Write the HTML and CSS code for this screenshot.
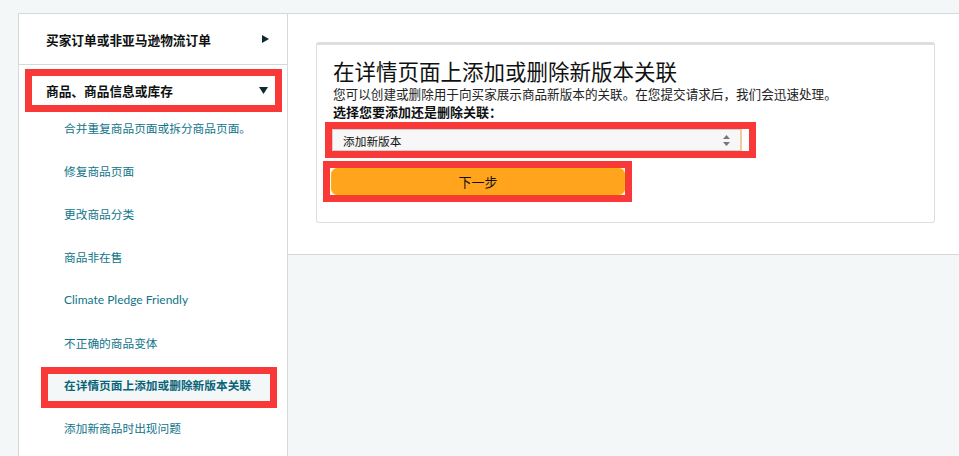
FILE: index.html
```html
<!DOCTYPE html>
<html lang="zh-CN">
<head>
    <meta charset="UTF-8">
    <meta name="viewport" content="width=device-width, initial-scale=1.0">
    <title>在详情页面上添加或删除新版本关联</title>
    <link rel="stylesheet" href="styles.css">
</head>
<body>

    <div class="page">
        <div class="sidebar">
            <div class="menu-head">
                <span>买家订单或非亚马逊物流订单</span>
                <svg class="caret" width="7" height="8" viewBox="0 0 7 8"><polygon points="0,0 7,4 0,8" fill="#0f2a33"/></svg>
            </div>

            <div class="menu-head open">
                <span>商品、商品信息或库存</span>
                <svg class="caret" width="9" height="7" viewBox="0 0 9 7"><polygon points="0,0 9,0 4.5,7" fill="#0f2a33"/></svg>
            </div>

            <ul class="sub-menu">
                <li>合并重复商品页面或拆分商品页面。</li>
                <li>修复商品页面</li>
                <li>更改商品分类</li>
                <li>商品非在售</li>
                <li class="latin">Climate Pledge Friendly</li>
                <li>不正确的商品变体</li>
                <li class="active">在详情页面上添加或删除新版本关联</li>
                <li>添加新商品时出现问题</li>
            </ul>
        </div>

        <div class="main">
            <div class="card">
                <div class="card-title">在详情页面上添加或删除新版本关联</div>
                <div class="card-desc">您可以创建或删除用于向买家展示商品新版本的关联。在您提交请求后，我们会迅速处理。</div>
                <div class="card-label">选择您要添加还是删除关联：</div>

                <div class="select-wrap">
                    <div class="select-box">
                        <span>添加新版本</span>
                        <svg width="7" height="11" viewBox="0 0 7 11"><polygon points="3.5,0 7,4 0,4" fill="#777"/><polygon points="0,7 7,7 3.5,11" fill="#777"/></svg>
                    </div>
                </div>

                <div class="btn-wrap">
                    <button class="next-btn">下一步</button>
                </div>
            </div>
        </div>
    </div>

</body>
</html>
```

FILE: styles.css
```css
body {
    margin: 0;
    background-color: #f4f7f8;
    font-family: "Noto Sans CJK SC", sans-serif;
    color: #0f1111;
    overflow: hidden;
}

.page {
    display: flex;
    align-items: flex-start;
    padding: 13px 0 0 18px;
}

.sidebar {
    width: 270px;
    height: 460px;
    box-sizing: border-box;
    background-color: white;
    border: 1px solid #d5d9d9;
    border-bottom: none;
    flex-shrink: 0;
}

.menu-head {
    display: flex;
    justify-content: space-between;
    align-items: center;
    font-size: 12.7px;
    font-weight: bold;
    height: 50px;
    padding: 0 18px 0 27px;
    border-bottom: 1px solid #d5d9d9;
}

.menu-head.open {
    height: 29px;
    margin: 4px 5px 0 6px;
    padding: 0 7px 0 14px;
    border: 7px solid #f93838;
}

.sub-menu {
    list-style: none;
    margin: -6px 0 0;
    padding: 0;
}

.sub-menu li {
    height: 43px;
    line-height: 43px;
    padding-left: 45px;
    font-size: 11.7px;
    color: #0f7489;
    white-space: nowrap;
}

.sub-menu li.latin {
    font-family: Lato, sans-serif;
    font-size: 12px;
}

.sub-menu li.active {
    height: 27px;
    line-height: 22px;
    margin: 3px 10px -2px 22px;
    padding-left: 16px;
    border: 7px solid #f93838;
    background-color: #f3f7f8;
    font-weight: bold;
    color: #0a6478;
}

.main {
    flex: 1;
    height: 242px;
    box-sizing: border-box;
    background-color: white;
    border-top: 1px solid #d5d9d9;
    border-bottom: 1px solid #d5d9d9;
    padding: 28px 24px 0 28px;
}

.card {
    border: 1px solid #dedede;
    border-top: 3px solid #dedede;
    border-radius: 3px;
    padding: 13px 16px 20px;
}

.card-title {
    font-size: 21.5px;
    line-height: 26px;
    margin-bottom: 2px;
    color: #0f1111;
}

.card-desc {
    font-size: 12.6px;
    line-height: 16px;
    color: #222;
}

.card-label {
    font-size: 13px;
    line-height: 18px;
    margin-top: 1px;
    font-weight: bold;
}

.select-wrap {
    margin: 1px 0 0 -8px;
    border: 7px solid #f93838;
    width: 417px;
    height: 22px;
}

.select-box {
    display: flex;
    justify-content: space-between;
    align-items: center;
    width: 410px;
    height: 22px;
    box-sizing: border-box;
    padding: 0 10px;
    background-color: #f7f7f7;
    border: 1px solid #d0d0d0;
    border-right: 2px solid #f5c9a0;
    font-size: 11.7px;
}

.btn-wrap {
    width: 295px;
    height: 27px;
    margin: 3px 0 0 -10px;
    border: 7px solid #f93838;
}

.next-btn {
    display: block;
    width: 294px;
    height: 27px;
    margin-left: 1px;
    background-color: #ffa41c;
    border: 1px solid #ffb300;
    border-radius: 6px;
    font-family: "Noto Sans CJK SC", sans-serif;
    font-size: 13px;
    color: #0f1111;
    cursor: pointer;
}
```
